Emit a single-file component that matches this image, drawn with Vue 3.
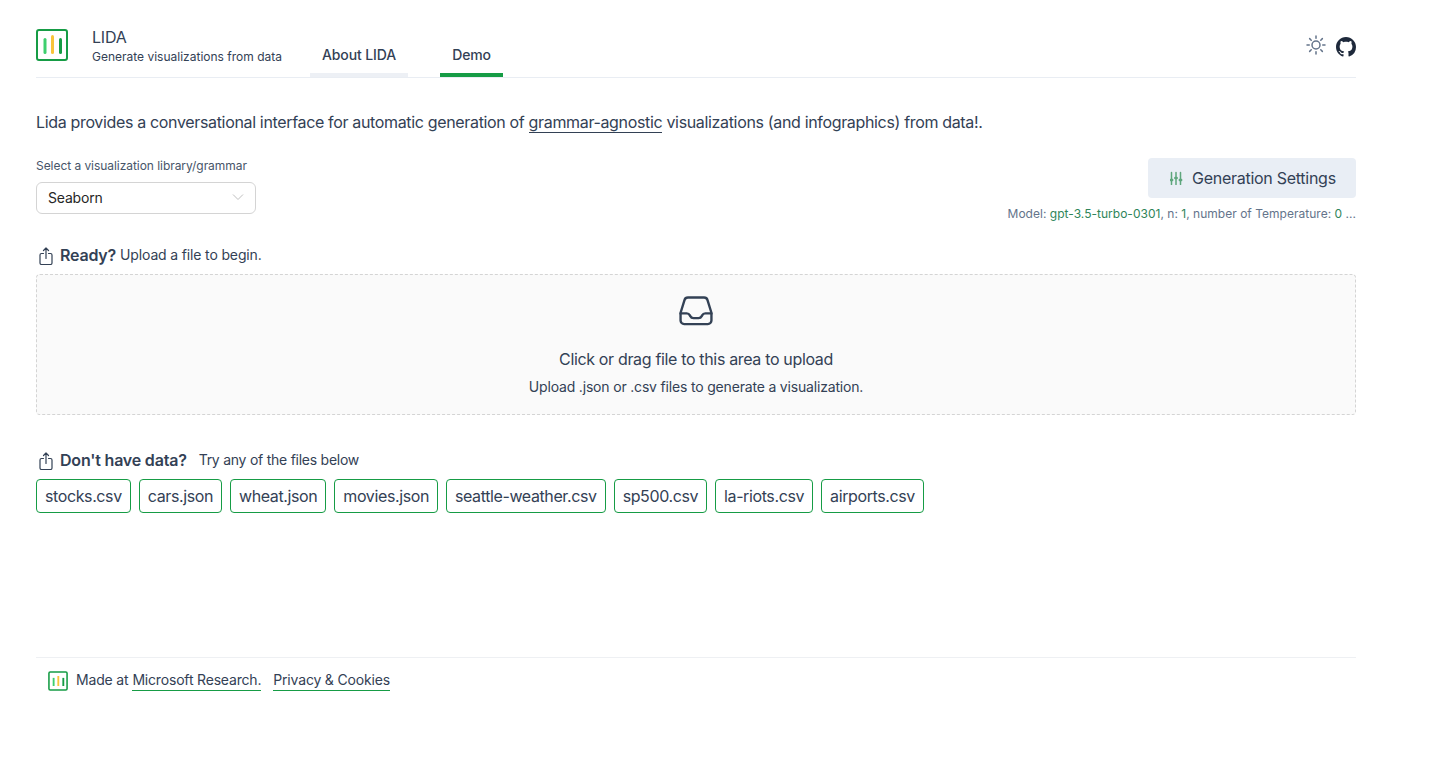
<script setup>
const files = ['stocks.csv', 'cars.json', 'wheat.json', 'movies.json', 'seattle-weather.csv', 'sp500.csv', 'la-riots.csv', 'airports.csv']
</script>

<template>
  <div class="page">
    <header class="header">
      <div class="brand">
        <svg class="logo" width="32" height="32" viewBox="0 0 32 32" fill="none">
          <rect x="1" y="1" width="30" height="30" rx="2" stroke="#169c45" stroke-width="2" />
          <path d="M9 10.500v13" stroke="#3ecf6e" stroke-width="3" stroke-linecap="round" />
          <path d="M16.500 7.500v16" stroke="#f8c43a" stroke-width="3" stroke-linecap="round" />
          <path d="M24.500 10.500v13" stroke="#169c45" stroke-width="3" stroke-linecap="round" />
        </svg>
        <div class="brand-text">
          <div class="brand-title">LIDA</div>
          <div class="brand-sub">Generate visualizations from data</div>
        </div>
      </div>
      <nav class="tabs">
        <a class="tab">About LIDA</a>
        <a class="tab active">Demo</a>
      </nav>
      <div class="header-icons">
        <svg width="24" height="24" viewBox="0 0 24 24" fill="none" stroke="#64748b" stroke-width="1.500" stroke-linecap="round" stroke-linejoin="round">
          <circle cx="12" cy="12" r="4" />
          <path d="M12 3v2.250M18.360 5.640l-1.590 1.590M21 12h-2.250M18.360 18.360l-1.590-1.590M12 18.750V21M7.230 16.770l-1.590 1.590M5.250 12H3M7.230 7.230 5.640 5.640" />
        </svg>
        <svg class="github" width="20" height="20" viewBox="0 0 16 16" fill="#1e293b">
          <path d="M8 0C3.580 0 0 3.580 0 8c0 3.540 2.290 6.530 5.470 7.590.4.070.55-.17.55-.38 0-.19-.01-.82-.01-1.490-2.010.37-2.530-.49-2.690-.94-.09-.23-.48-.94-.82-1.130-.28-.15-.68-.52-.01-.53.63-.01 1.080.58 1.230.82.720 1.210 1.870.87 2.330.66.070-.52.280-.87.510-1.070-1.780-.2-3.640-.89-3.640-3.950 0-.87.310-1.590.820-2.150-.08-.2-.36-1.020.08-2.120 0 0 .67-.21 2.200.82.640-.18 1.320-.27 2-.27.680 0 1.360.09 2 .27 1.530-1.040 2.200-.82 2.200-.82.440 1.100.160 1.920.080 2.120.51.560.82 1.270.82 2.150 0 3.070-1.870 3.750-3.650 3.950.290.250.540.730.540 1.480 0 1.070-.01 1.930-.01 2.200 0 .21.150.46.550.38A8.013 8.013 0 0 0 16 8c0-4.420-3.580-8-8-8z" />
        </svg>
      </div>
    </header>

    <p class="intro">
      Lida provides a conversational interface for automatic generation of
      <span class="intro-link">grammar-agnostic</span>
      visualizations (and infographics) from data!.
    </p>

    <section class="controls">
      <div>
        <div class="select-label">Select a visualization library/grammar</div>
        <div class="select">
          <span>Seaborn</span>
          <svg width="12" height="12" viewBox="0 0 12 12" fill="none" stroke="#bfbfbf" stroke-width="1">
            <path d="M1 3.500 6 8.500l5-5" />
          </svg>
        </div>
      </div>
      <div class="settings">
        <button class="settings-btn">
          <svg class="sliders" width="14" height="14" viewBox="0 0 14 14" fill="none" stroke="#5ea67c" stroke-width="1.500" stroke-linecap="round">
            <path d="M1.500 1.500v12M6 1.500v12M10.500 1.500v12" />
            <path d="M.8 9h1.400M5.300 7h1.400M9.800 9h1.400" stroke-width="2.400" />
          </svg>
          <span>Generation Settings</span>
        </button>
        <div class="settings-summary">
          Model: <span class="green">gpt-3.5-turbo-0301</span>, n: <span class="green">1</span>, number of Temperature: <span class="green">0</span> ...
        </div>
      </div>
    </section>

    <div class="section-head ready">
      <svg class="share" width="18" height="18" viewBox="0 0 18 18" fill="none" stroke="#334155" stroke-width="1.200" stroke-linecap="round" stroke-linejoin="round">
        <path d="M7.500 6.500H5.500a1.500 1.500 0 0 0-1.500 1.500v8a1.500 1.500 0 0 0 1.500 1.500h9a1.500 1.500 0 0 0 1.500-1.500V8a1.500 1.500 0 0 0-1.500-1.500H12.500" />
        <path d="M10 11.500V1M7.500 3.500 10 1l2.500 2.500" />
      </svg>
      <strong>Ready?</strong>
      <span>Upload a file to begin.</span>
    </div>

    <div class="dropzone">
      <svg class="inbox" width="38" height="38" viewBox="0 0 24 24" fill="none" stroke="#334155" stroke-width="1.500" stroke-linecap="round" stroke-linejoin="round">
        <path d="M2.250 13.500h3.860a2.250 2.250 0 0 1 2.012 1.244l.256.512a2.250 2.250 0 0 0 2.013 1.244h3.218a2.250 2.250 0 0 0 2.013-1.244l.256-.512a2.250 2.250 0 0 1 2.013-1.244h3.859" />
        <path d="M2.250 13.500V18a2.250 2.250 0 0 0 2.250 2.250h15A2.250 2.250 0 0 0 21.750 18v-4.500c0-.24-.04-.48-.11-.71L19.270 5.070a2.250 2.250 0 0 0-2.150-1.570H6.880a2.250 2.250 0 0 0-2.150 1.570L2.360 12.790a2.250 2.250 0 0 0-.11.710Z" />
      </svg>
      <div class="drop-title">Click or drag file to this area to upload</div>
      <div class="drop-sub">Upload .json or .csv files to generate a visualization.</div>
    </div>

    <div class="section-head nodata">
      <svg class="share" width="18" height="18" viewBox="0 0 18 18" fill="none" stroke="#334155" stroke-width="1.200" stroke-linecap="round" stroke-linejoin="round">
        <path d="M7.500 6.500H5.500a1.500 1.500 0 0 0-1.500 1.500v8a1.500 1.500 0 0 0 1.500 1.500h9a1.500 1.500 0 0 0 1.500-1.500V8a1.500 1.500 0 0 0-1.500-1.500H12.500" />
        <path d="M10 11.500V1M7.500 3.500 10 1l2.500 2.500" />
      </svg>
      <strong>Don't have data?</strong>
      <span class="try">Try any of the files below</span>
    </div>

    <div class="files">
      <div v-for="f in files" :key="f" class="file">{{ f }}</div>
    </div>

    <footer class="footer">
      <svg class="footer-logo" width="20" height="20" viewBox="0 0 32 32" fill="none">
        <rect x="1.500" y="1.500" width="29" height="29" rx="2" stroke="#169c45" stroke-width="2.500" />
        <path d="M9 11v13" stroke="#3ecf6e" stroke-width="3" />
        <path d="M16.500 8v16" stroke="#f8c43a" stroke-width="3" />
        <path d="M24.500 11v13" stroke="#169c45" stroke-width="3" />
      </svg>
      <span class="made">Made at</span>
      <a class="foot-link">Microsoft Research.</a>
      <a class="foot-link second">Privacy &amp; Cookies</a>
    </footer>
  </div>
</template>

<style scoped>
.page {
  width: 1320px;
  margin-left: 36px;
  font-family: Inter, "Liberation Sans", sans-serif;
  color: #334155;
}
.header {
  display: flex;
  align-items: flex-end;
  height: 78px;
  box-sizing: border-box;
  border-bottom: 1px solid #e9edf3;
}
.brand {
  display: flex;
  align-self: flex-start;
  margin-top: 29px;
}
.logo {
  display: block;
  flex: none;
}
.brand-text {
  margin-left: 24px;
}
.brand-title {
  font-size: 16px;
  line-height: 18px;
  margin-top: -1px;
  letter-spacing: -0.2px;
}
.brand-sub {
  font-size: 12px;
  line-height: 16px;
  margin-top: 3px;
}
.tabs {
  display: flex;
  gap: 32px;
  margin-left: 28px;
}
.tab {
  display: block;
  padding: 0 12px 8px;
  font-size: 14px;
  line-height: 20px;
  font-weight: 500;
  letter-spacing: -0.1px;
  border-bottom: 4px solid #edf0f5;
  border-top-left-radius: 3px;
  border-top-right-radius: 3px;
}
.tab.active {
  border-bottom-color: #169c45;
}
.header-icons {
  margin-left: auto;
  align-self: flex-start;
  margin-top: 33px;
  display: flex;
  align-items: flex-start;
  gap: 8px;
}
.github {
  display: block;
  margin-top: 4px;
}
.intro {
  margin: 33px 0 0;
  font-size: 16px;
  line-height: 22px;
  letter-spacing: -0.34px;
}
.intro-link {
  border-bottom: 1px solid #334155;
}
.controls {
  display: flex;
  justify-content: space-between;
  align-items: flex-start;
  margin-top: 25px;
}
.select-label {
  font-size: 12px;
  line-height: 16px;
  color: #475569;
  letter-spacing: -0.05px;
}
.select {
  display: flex;
  align-items: center;
  justify-content: space-between;
  width: 220px;
  height: 32px;
  box-sizing: border-box;
  margin-top: 8px;
  padding: 0 11px 2px;
  border: 1px solid #d4d4d4;
  border-radius: 6px;
  font-size: 14px;
  letter-spacing: -0.18px;
  color: #262626;
}
.settings {
  display: flex;
  flex-direction: column;
  align-items: flex-end;
}
.settings-btn {
  display: flex;
  align-items: center;
  gap: 8px;
  width: 208px;
  height: 40px;
  padding: 0 20px 0 22px;
  box-sizing: border-box;
  background: #e9eef5;
  border: 0;
  border-radius: 4px;
  font: 400 16px Inter, "Liberation Sans", sans-serif;
  letter-spacing: -0.27px;
  color: #334155;
  white-space: nowrap;
}
.sliders {
  flex: none;
}
.settings-summary {
  margin-top: 8px;
  font-size: 12px;
  line-height: 16px;
  letter-spacing: 0.02px;
  color: #64748b;
  white-space: nowrap;
}
.green {
  color: #2f855a;
}
.section-head {
  display: flex;
  align-items: center;
  font-size: 14px;
  line-height: 22px;
  letter-spacing: -0.15px;
}
.section-head strong {
  font-size: 16px;
  font-weight: 600;
  letter-spacing: -0.2px;
  margin-right: 4px;
}
.share {
  flex: none;
  margin-right: 6px;
  margin-top: 2px;
}
.ready {
  margin-top: 22px;
}
.dropzone {
  margin-top: 8px;
  height: 141px;
  box-sizing: border-box;
  border: 1px dashed #d4d4d4;
  border-radius: 4px;
  background: #fafafa;
  display: flex;
  flex-direction: column;
  align-items: center;
  padding-top: 17px;
}
.inbox {
  display: block;
}
.drop-title {
  margin-top: 17px;
  font-size: 16px;
  line-height: 24px;
  letter-spacing: -0.34px;
}
.drop-sub {
  margin-top: 5px;
  font-size: 14px;
  line-height: 22px;
  letter-spacing: -0.18px;
}
.nodata {
  margin-top: 34px;
}
.try {
  margin-left: 8px;
  letter-spacing: -0.25px;
}
.files {
  display: flex;
  gap: 8px;
  margin-top: 8px;
}
.file {
  height: 34px;
  box-sizing: border-box;
  padding: 0 8px;
  border: 1px solid #169c45;
  border-radius: 4px;
  font-size: 16px;
  line-height: 32px;
  letter-spacing: -0.39px;
}
.footer {
  display: flex;
  align-items: center;
  margin-top: 144px;
  padding: 12px 0 0 12px;
  border-top: 1px solid #eef0f3;
  font-size: 14px;
  line-height: 20px;
  letter-spacing: -0.18px;
}
.footer-logo {
  display: block;
  margin-right: 8px;
}
.made {
  margin-right: 4px;
  padding-bottom: 1px;
}
.foot-link {
  border-bottom: 1px solid #169c45;
}
.foot-link.second {
  margin-left: 12px;
}
</style>
